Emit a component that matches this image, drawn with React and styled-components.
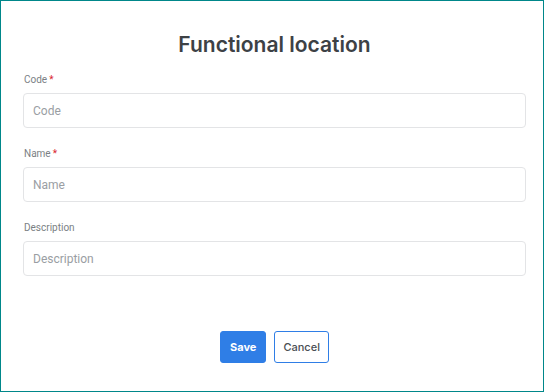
import React from 'react'
import styled, { createGlobalStyle } from 'styled-components'

const GlobalStyle = createGlobalStyle`
  html, body {
    margin: 0;
    padding: 0;
    background: #fff;
  }
  * {
    box-sizing: border-box;
  }
`

const Dialog = styled.div`
  width: 544px;
  height: 392px;
  border: 1px solid #00878a;
  background: #fff;
  padding: 29px 17px 0 22px;
  display: flex;
  flex-direction: column;
  font-family: Roboto, "Liberation Sans", sans-serif;
`

const Title = styled.h2`
  margin: 0 0 13px;
  text-align: center;
  font-family: Inter, "Noto Sans", sans-serif;
  font-size: 21px;
  font-weight: 600;
  color: #3d4145;
  line-height: 30px;
`

const Field = styled.div`
  display: flex;
  flex-direction: column;
  margin-bottom: 19px;
`

const Label = styled.label`
  font-size: 10px;
  color: #7b7f84;
  line-height: 14px;
  margin-bottom: 6px;
  padding-left: 1px;
`

const Star = styled.span`
  color: #d9262e;
  margin-left: 2px;
`

const Input = styled.input`
  height: 35px;
  border: 1px solid #e3e4e6;
  border-radius: 4px;
  padding: 0 9px;
  font-family: Roboto, "Liberation Sans", sans-serif;
  font-size: 12px;
  color: #333;
  outline: none;

  &::placeholder {
    color: #9a9ea3;
  }
`

const Actions = styled.div`
  margin-top: auto;
  margin-bottom: 28px;
  display: flex;
  justify-content: center;
  gap: 8px;
`

const Button = styled.button`
  height: 32px;
  padding: 0 ${p => (p.$primary ? '9px' : '8px')};
  border-radius: 3px;
  border: 1px solid #2f7ee6;
  background: ${p => (p.$primary ? '#2f7ee6' : '#fff')};
  color: ${p => (p.$primary ? '#fff' : '#4a4e54')};
  font-family: Inter, "Noto Sans", sans-serif;
  font-size: 11px;
  font-weight: ${p => (p.$primary ? 700 : 500)};
  cursor: pointer;
`

const fields = [
  { name: 'Code', required: true },
  { name: 'Name', required: true },
  { name: 'Description', required: false },
]

export default function App() {
  return (
    <>
      <GlobalStyle />
      <Dialog>
        <Title>Functional location</Title>
        {fields.map(f => (
          <Field key={f.name}>
            <Label>
              {f.name}
              {f.required && <Star>*</Star>}
            </Label>
            <Input placeholder={f.name} />
          </Field>
        ))}
        <Actions>
          <Button $primary>Save</Button>
          <Button>Cancel</Button>
        </Actions>
      </Dialog>
    </>
  )
}
